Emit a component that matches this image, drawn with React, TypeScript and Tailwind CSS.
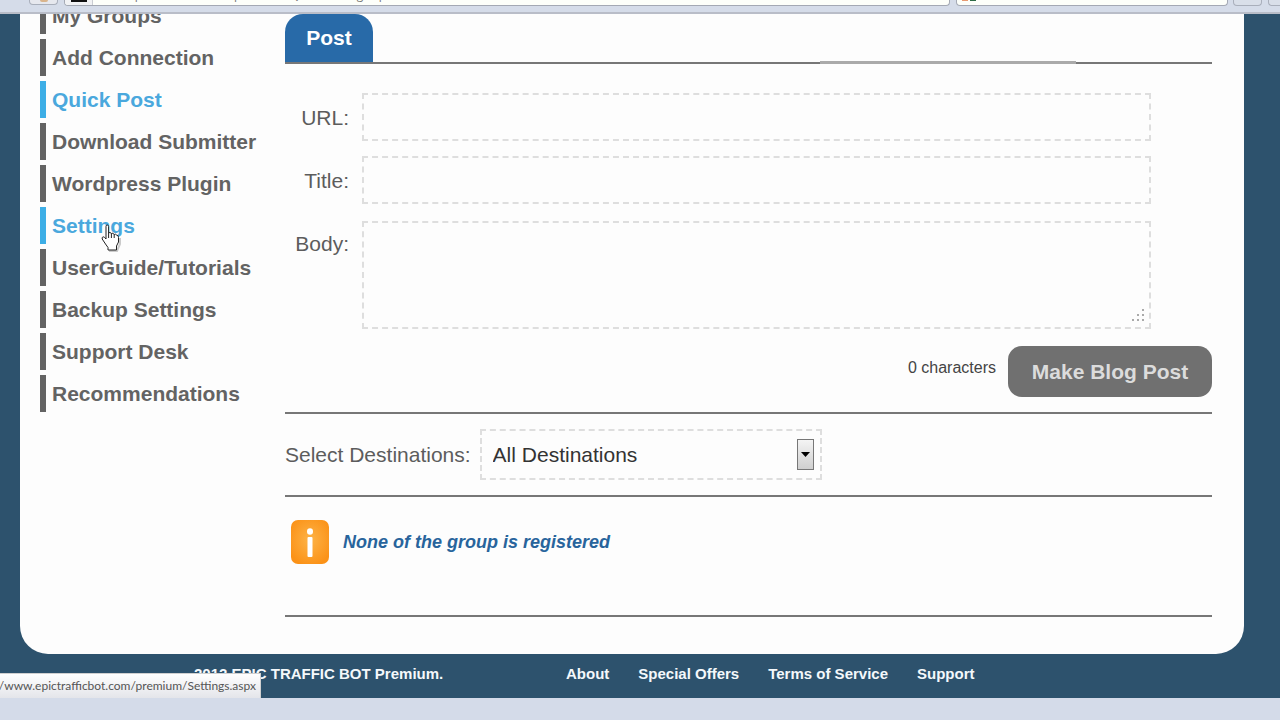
import { useState } from 'react';

const menuItems = [
  { label: 'My Groups' },
  { label: 'Add Connection' },
  { label: 'Quick Post', active: true },
  { label: 'Download Submitter' },
  { label: 'Wordpress Plugin' },
  { label: 'Settings', active: true },
  { label: 'UserGuide/Tutorials' },
  { label: 'Backup Settings' },
  { label: 'Support Desk' },
  { label: 'Recommendations' },
];

const footerLinks = ['About', 'Special Offers', 'Terms of Service', 'Support'];

const HandCursor = () => (
  <svg className="pointer-events-none absolute top-[17px] left-[55px] h-7 w-5" viewBox="0 0 20 28" aria-hidden="true">
    <path d="M8 27 H16 L19 20 V14" fill="none" stroke="#999" strokeWidth="2" opacity="0.5" />
    <path
      d="M5 2.5 Q5 1 6.300 1 Q7.600 1 7.600 2.500 V9 Q9 7.500 10.300 9.500 Q12 8.500 13.200 10.500 Q14.500 9.500 15.800 11.200 Q17.500 11 17.500 13.500 V18 L15.500 22 V26 H7 V23.500 L4.500 20 L1.200 15 Q0.800 13 2.200 12.800 Q3.500 12.800 5 15 Z"
      fill="#fff"
      stroke="#222"
      strokeWidth="1"
      strokeLinejoin="round"
    />
    <path d="M7.600 9 V14 M10.400 9.500 V14 M13.200 10.500 V14" stroke="#222" strokeWidth="1" />
  </svg>
);

const InfoIcon = () => (
  <svg className="h-11 w-[38px]" viewBox="0 0 38 44" aria-hidden="true">
    <defs>
      <radialGradient id="info" cx="50%" cy="45%" r="60%">
        <stop offset="0%" stopColor="#fdb347" />
        <stop offset="100%" stopColor="#fb9217" />
      </radialGradient>
    </defs>
    <rect width="38" height="44" rx="7" fill="url(#info)" />
    <ellipse cx="19" cy="11.500" rx="3" ry="3.200" fill="#fff" />
    <rect x="16.500" y="17" width="5" height="20" rx="1" fill="#fff" />
  </svg>
);

const BrowserBar = () => (
  <div className="flex h-[14px] items-start overflow-hidden border-b-2 border-[#b9bdc8] bg-[#d5dce9] pl-[29px]">
    <button aria-label="Back" className="flex h-[5px] w-[29px] justify-center rounded-b-sm border border-t-0 border-[#a9afbb] bg-[#e6e8ee]">
      <span className="h-[2px] w-2 rounded-b bg-[#d9b48c]" />
    </button>
    <div className="ml-[6px] flex h-[6px] flex-1 items-end overflow-hidden rounded-b-sm border border-t-0 border-[#a4a9b4] bg-[#fdfffa]">
      <div className="flex h-[5px] w-[28px] items-start justify-center border-r border-[#c9ccd2] bg-[#f1f2f4]">
        <span className="h-[2px] w-4 bg-[#111]" />
      </div>
      <input
        aria-label="Address"
        className="h-5 min-w-0 flex-1 bg-transparent pl-1 font-['Open_Sans',sans-serif] text-[12px] leading-5 text-[#777] outline-none"
        defaultValue="www.epictrafficbot.com/premium/QuickPosting.aspx"
      />
    </div>
    <div className="ml-[6px] flex h-[6px] w-[272px] items-start rounded-b-sm border border-t-0 border-[#a4a9b4] bg-[#fdfffa] pl-[5px]">
      <span className="h-[1px] w-[6px] bg-[#e79a72]" />
      <span className="ml-[2px] h-[1px] w-[6px] bg-[#2c6a45]" />
    </div>
    <button aria-label="Downloads" className="ml-[5px] h-[6px] w-[29px] rounded-b-sm border border-t-0 border-[#a9afbb] bg-[#d9dfe9]" />
    <button aria-label="Home" className="ml-[6px] h-[6px] w-[12px] rounded-bl-sm border-b border-l border-[#a9afbb] bg-[#d9dfe9]" />
  </div>
);

const App = () => {
  const [url, setUrl] = useState('');
  const [title, setTitle] = useState('');
  const [body, setBody] = useState('');

  const field = 'block w-full border-2 border-dashed border-[#dedede] bg-transparent px-3 text-[21px] text-[#333] outline-none';

  return (
    <div className="relative overflow-hidden bg-[#2d526d] font-['Liberation_Sans',Arial,sans-serif]">
      <BrowserBar />

      <div className="mr-9 ml-5 flex overflow-hidden rounded-b-[28px] bg-[#fdfdfd] pr-8 pl-5">
        <nav className="-mt-[17px] flex w-[245px] shrink-0 flex-col gap-[5px]">
          {menuItems.map((item) => (
            <a
              key={item.label}
              href="#"
              className={`relative flex h-[37px] items-center border-l-[6px] pl-[6px] text-[21px] font-bold ${
                item.active ? 'border-[#3daee6] text-[#4aa8dd]' : 'border-[#636363] text-[#636363]'
              }`}
            >
              {item.label}
              {item.label === 'Settings' && <HandCursor />}
            </a>
          ))}
        </nav>

        <main className="min-w-0 flex-1 pb-[37px] text-[21px] text-[#5c5c5c]">
          <div className="relative flex border-b-2 border-[#777]">
            <button className="h-12 w-[88px] rounded-t-[18px] bg-[#286aa8] font-bold text-white">Post</button>
            {/* lighter part of the tab rule */}
            <span className="absolute right-[136px] -bottom-[2px] h-[3px] w-[256px] bg-[#aaa]" />
          </div>

          <form className="grid grid-cols-[64px_1fr] gap-x-[13px] gap-y-[15px] pt-[29px] pr-[61px]">
            <label htmlFor="url" className="pt-[13px] text-right leading-6">URL:</label>
            <input id="url" className={`${field} h-12`} value={url} onChange={(e) => setUrl(e.target.value)} />
            <label htmlFor="title" className="pt-[13px] text-right leading-6">Title:</label>
            <input id="title" className={`${field} h-12`} value={title} onChange={(e) => setTitle(e.target.value)} />
            <label htmlFor="body" className="pt-[13px] text-right leading-6">Body:</label>
            <div className="relative pt-[2px]">
              <textarea
                id="body"
                className={`${field} h-[108px] resize-none py-2`}
                value={body}
                onChange={(e) => setBody(e.target.value)}
              />
              <svg className="pointer-events-none absolute right-[7px] bottom-2 h-3 w-3" viewBox="0 0 12 12" fill="#aaa" aria-hidden="true">
                <path d="M10 0h2v2h-2zM5 5h2v2h-2zM10 5h2v2h-2zM0 10h2v2h-2zM5 10h2v2h-2zM10 10h2v2h-2z" />
              </svg>
            </div>
          </form>

          <div className="flex justify-end gap-3 border-b-2 border-[#777] pt-[17px] pb-[15px]">
            <span className="pt-3 text-[16px] leading-5 text-[#444]">{body.length} characters</span>
            <button className="h-[51px] w-[204px] rounded-[14px] bg-[#707070] font-bold text-[#dcdcdc]">
              Make Blog Post
            </button>
          </div>

          <div className="flex items-center gap-[9px] border-b-2 border-[#777] pt-[15px] pb-[15px]">
            <label htmlFor="destinations">Select Destinations:</label>
            <div className="relative w-[342px]">
              <select
                id="destinations"
                className="block h-[51px] w-full appearance-none border-2 border-dashed border-[#dedede] bg-transparent pl-[11px] text-[#333] outline-none"
              >
                <option>All Destinations</option>
              </select>
              <span className="pointer-events-none absolute top-[10px] right-2 flex h-[31px] w-[17px] items-center justify-center border border-[#777] bg-linear-to-b from-[#f4f4f4] to-[#cfcfcf]">
                <svg className="h-[5px] w-[9px]" viewBox="0 0 9 5" aria-hidden="true">
                  <path d="M0 0h9L4.500 5z" fill="#000" />
                </svg>
              </span>
            </div>
          </div>

          <div className="flex h-[120px] items-start gap-[14px] border-b-2 border-[#777] pt-[23px] pl-[6px]">
            <InfoIcon />
            <p className="text-[18px] leading-[45px] font-bold text-[#28649c] italic">None of the group is registered</p>
          </div>
        </main>
      </div>

      <footer className="flex h-11 items-center pb-1 pl-[194px] text-[15px] font-bold whitespace-nowrap text-[#f4f8fb]">
        <p className="w-[372px]">2012 EPIC TRAFFIC BOT Premium.</p>
        <div className="flex gap-[29px]">
          {footerLinks.map((link) => (
            <a key={link} href="#">{link}</a>
          ))}
        </div>
      </footer>

      <div className="absolute bottom-[22px] left-0 flex h-[25px] w-[261px] items-center justify-end border-t border-r border-[#d0d0d0] bg-linear-to-b from-white to-[#e4e5ea] pr-1 font-['Lato',sans-serif] text-[12px] whitespace-nowrap text-[#555]">
        /www.epictrafficbot.com/premium/Settings.aspx
      </div>
      <div className="h-[22px] bg-[#d4dbe9]" />
    </div>
  );
};

export default App;
